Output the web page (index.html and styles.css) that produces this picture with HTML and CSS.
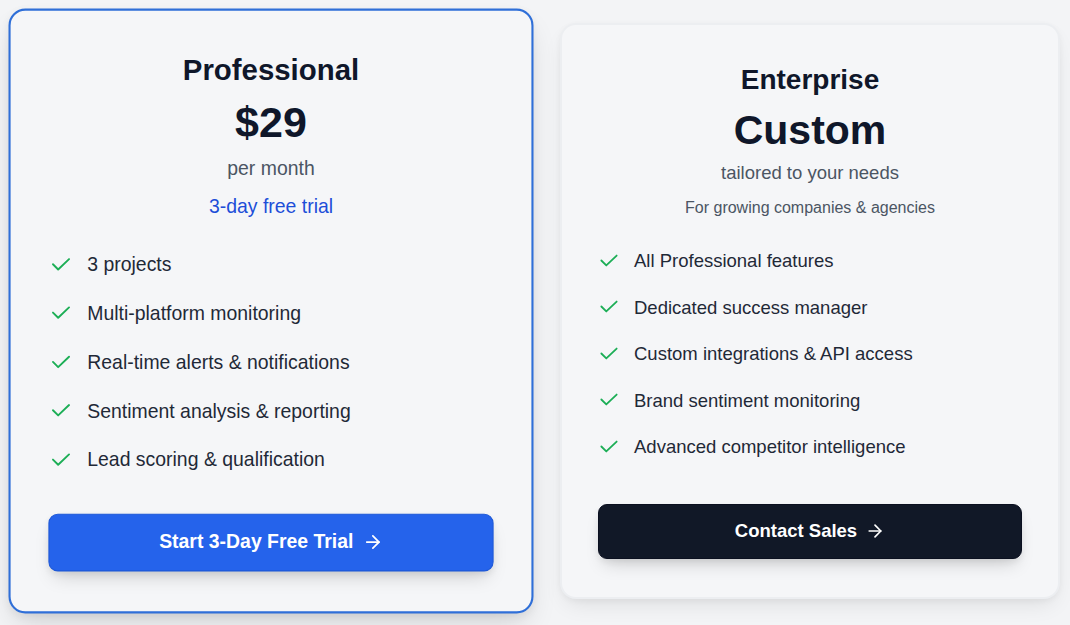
FILE: index.html
```html
<!DOCTYPE html>
<html lang="en">

<head>
    <meta charset="UTF-8">
    <meta name="viewport" content="width=device-width, initial-scale=1.0">
    <title>Pricing</title>
    <link rel="stylesheet" href="styles.css">
</head>

<body>

    <div class="plans">
        <div class="plan popular">
            <h2 class="plan-name">Professional</h2>
            <div class="plan-price">$29</div>
            <div class="plan-period">per month</div>
            <div class="plan-trial">3-day free trial</div>

            <ul class="features">
                <li><svg class="check" viewBox="0 0 20 14"><polyline points="1.5,7 7,12.5 18.5,1.5" /></svg>3 projects</li>
                <li><svg class="check" viewBox="0 0 20 14"><polyline points="1.5,7 7,12.5 18.5,1.5" /></svg>Multi-platform monitoring</li>
                <li><svg class="check" viewBox="0 0 20 14"><polyline points="1.5,7 7,12.5 18.5,1.5" /></svg>Real-time alerts &amp; notifications</li>
                <li><svg class="check" viewBox="0 0 20 14"><polyline points="1.5,7 7,12.5 18.5,1.5" /></svg>Sentiment analysis &amp; reporting</li>
                <li><svg class="check" viewBox="0 0 20 14"><polyline points="1.5,7 7,12.5 18.5,1.5" /></svg>Lead scoring &amp; qualification</li>
            </ul>

            <button class="btn btn-primary">Start 3-Day Free Trial
                <svg class="arrow" viewBox="0 0 24 24"><path d="M5 12h14" /><path d="m12 5 7 7-7 7" /></svg>
            </button>
        </div>

        <div class="plan">
            <h2 class="plan-name">Enterprise</h2>
            <div class="plan-price">Custom</div>
            <div class="plan-period">tailored to your needs</div>
            <div class="plan-note">For growing companies &amp; agencies</div>

            <ul class="features">
                <li><svg class="check" viewBox="0 0 20 14"><polyline points="1.5,7 7,12.5 18.5,1.5" /></svg>All Professional features</li>
                <li><svg class="check" viewBox="0 0 20 14"><polyline points="1.5,7 7,12.5 18.5,1.5" /></svg>Dedicated success manager</li>
                <li><svg class="check" viewBox="0 0 20 14"><polyline points="1.5,7 7,12.5 18.5,1.5" /></svg>Custom integrations &amp; API access</li>
                <li><svg class="check" viewBox="0 0 20 14"><polyline points="1.5,7 7,12.5 18.5,1.5" /></svg>Brand sentiment monitoring</li>
                <li><svg class="check" viewBox="0 0 20 14"><polyline points="1.5,7 7,12.5 18.5,1.5" /></svg>Advanced competitor intelligence</li>
            </ul>

            <button class="btn btn-dark">Contact Sales
                <svg class="arrow" viewBox="0 0 24 24"><path d="M5 12h14" /><path d="m12 5 7 7-7 7" /></svg>
            </button>
        </div>
    </div>

</body>

</html>
```

FILE: styles.css
```css
html,
body {
    min-height: 100%;
}

body {
    font-family: "Liberation Sans", Arial, sans-serif;
    margin: 0;
    padding: 0;
    background-color: #f3f4f6;
    color: #1f2937;
}

.plans {
    display: flex;
    align-items: stretch;
    gap: 39px;
    padding: 23px 0 40px 21px;
}

.plan {
    width: 500px;
    box-sizing: border-box;
    display: flex;
    flex-direction: column;
    padding: 38px 36px;
    background-color: #f5f6f8;
    border: 2px solid #eceef1;
    border-radius: 16px;
    box-shadow: 0 10px 22px -6px rgba(0, 0, 0, 0.1), 0 2px 6px rgba(0, 0, 0, 0.04);
    text-align: center;
}

/* highlighted plan sits a little bigger than the rest */
.plan.popular {
    border-color: #2f6fd8;
    transform: scale(1.05);
    box-shadow: 0 14px 28px -8px rgba(0, 0, 0, 0.16), 0 3px 8px rgba(0, 0, 0, 0.05);
}

.plan-name {
    margin: 0;
    font-size: 28px;
    line-height: 34px;
    font-weight: bold;
    color: #0f172a;
}

.popular .plan-name {
    margin-top: 2px;
}

.plan-price {
    margin-top: 9px;
    font-size: 41px;
    line-height: 48px;
    font-weight: bold;
    color: #0f172a;
}

.popular .plan-price {
    margin-top: 8px;
}

.plan-period {
    margin-top: 5px;
    font-size: 18.5px;
    line-height: 28px;
    color: #4b5563;
}

.popular .plan-period {
    margin-top: 6px;
}

.plan-trial {
    margin-top: 9px;
    font-size: 18.5px;
    line-height: 28px;
    color: #1d4ed8;
}

.plan-note {
    margin-top: 9px;
    font-size: 16px;
    line-height: 24px;
    color: #4b5563;
}

.features {
    list-style: none;
    margin: 27px 0 36.5px;
    padding: 0 0 0 2px;
    display: flex;
    flex-direction: column;
    gap: 18.5px;
    text-align: left;
}

.popular .features {
    padding-left: 3px;
}

.features li {
    display: flex;
    align-items: center;
    gap: 16px;
    font-size: 18.5px;
    line-height: 28px;
    color: #1f2937;
}

.check {
    width: 18px;
    height: 13px;
    flex-shrink: 0;
    margin-top: -2px;
    fill: none;
    stroke: #1cae56;
    stroke-width: 2;
    stroke-linecap: round;
    stroke-linejoin: round;
}

.btn {
    margin-top: auto;
    height: 55px;
    width: 100%;
    display: flex;
    align-items: center;
    justify-content: center;
    gap: 8px;
    border-radius: 9px;
    font-family: inherit;
    font-size: 18.5px;
    font-weight: bold;
    color: #fff;
    cursor: pointer;
    box-shadow: 0 10px 18px -6px rgba(0, 0, 0, 0.18), 0 3px 6px rgba(0, 0, 0, 0.06);
}

.btn-primary {
    background-color: #2563eb;
    border: 1px solid #1d58d8;
}

.btn-dark {
    background-color: #111827;
    border: 1px solid #0b1020;
}

.arrow {
    width: 20px;
    height: 20px;
    fill: none;
    stroke: #fff;
    stroke-width: 2;
    stroke-linecap: round;
    stroke-linejoin: round;
}
```
